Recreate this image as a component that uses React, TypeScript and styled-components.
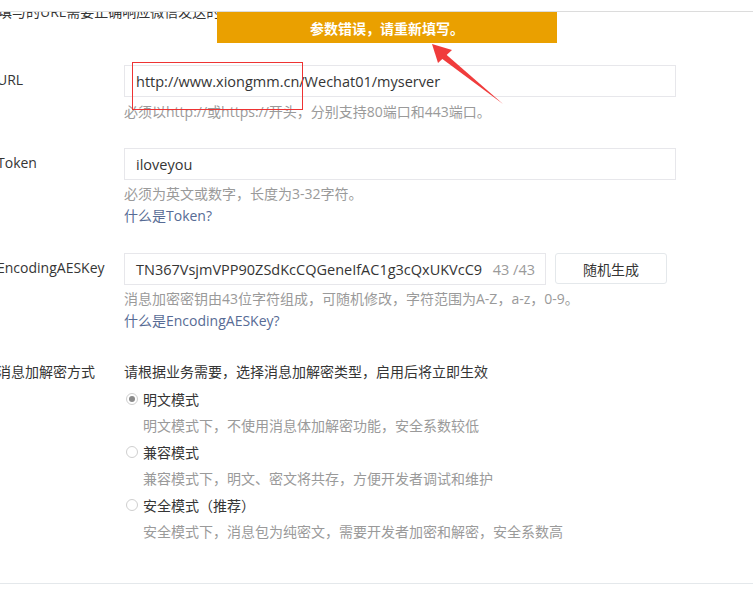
import React from "react";
import styled, { createGlobalStyle } from "styled-components";

const GlobalStyle = createGlobalStyle`
  html, body {
    margin: 0;
    padding: 0;
    background: #ffffff;
  }
  body {
    font-family: "Open Sans", "Noto Sans CJK SC", sans-serif;
    color: #353535;
    font-size: 14px;
  }
`;

const Screen = styled.div`
  position: relative;
  width: 753px;
  height: 596px;
  overflow: hidden;
  background: #fff;
`;

const BrowserEdge = styled.div`
  height: 11px;
  border-bottom: 1px solid #dcdcdc;
  background: #fff;
  position: relative;
  z-index: 2;
`;

// the page is scrolled: only the bottom of this line shows under the browser edge
const IntroClip = styled.div`
  height: 9px;
  width: 219px;
  overflow: hidden;
  margin-left: -2px;
`;

const IntroText = styled.div`
  font-size: 14px;
  line-height: 14px;
  margin-top: -7px;
  white-space: nowrap;
`;

const Form = styled.div`
  margin-left: -3px;
  margin-top: 44px;
  display: flex;
  flex-direction: column;
`;

const Row = styled.div<{ $gap?: number }>`
  display: grid;
  grid-template-columns: 127px 560px;
  margin-bottom: ${p => p.$gap ?? 0}px;
`;

const Label = styled.div<{ $top?: number }>`
  font-size: 14px;
  line-height: 22px;
  padding-top: ${p => p.$top ?? 0}px;
  white-space: nowrap;
`;

const Field = styled.div`
  display: flex;
  flex-direction: column;
`;

const InputLine = styled.div`
  display: flex;
  gap: 9px;
`;

const InputBox = styled.div<{ $width: number }>`
  box-sizing: border-box;
  width: ${p => p.$width}px;
  height: 32px;
  border: 1px solid #e7e7eb;
  padding: 0 10px 0 11px;
  display: flex;
  align-items: center;
  justify-content: space-between;
  font-size: 14.5px;
  color: #353535;
  white-space: nowrap;
`;

const Counter = styled.span`
  color: #9a9a9a;
  font-size: 14.5px;
`;

const Button = styled.button`
  box-sizing: border-box;
  width: 112px;
  height: 31px;
  border: 1px solid #e4e8eb;
  border-radius: 3px;
  background: #fff;
  font-family: "Noto Sans CJK SC", sans-serif;
  font-size: 14px;
  color: #353535;
`;

const Hint = styled.div<{ $top?: number }>`
  color: #9a9a9a;
  font-size: 14px;
  line-height: 22px;
  margin-top: ${p => p.$top ?? 0}px;
  white-space: nowrap;
`;

const HelpLink = styled.a`
  color: #576b95;
  font-size: 14px;
  line-height: 22px;
  text-decoration: none;
`;

const Intro = styled.div`
  font-size: 14px;
  line-height: 22px;
`;

const Options = styled.div`
  margin-top: 3px;
  display: flex;
  flex-direction: column;
`;

const OptionLine = styled.label`
  display: flex;
  align-items: center;
  height: 26px;
  font-size: 14px;
  padding-left: 2px;
`;

const Radio = styled.span<{ $checked?: boolean }>`
  box-sizing: border-box;
  width: 12px;
  height: 12px;
  border-radius: 50%;
  border: 1px solid #cfcfcf;
  margin-right: 5px;
  display: flex;
  align-items: center;
  justify-content: center;
  &::after {
    content: "";
    width: 6px;
    height: 6px;
    border-radius: 50%;
    background: ${p => (p.$checked ? "#8a8a8a" : "transparent")};
  }
`;

const OptionDesc = styled.div`
  height: 27px;
  line-height: 27px;
  padding-left: 19px;
  color: #9a9a9a;
  font-size: 14px;
`;

const BottomRule = styled.div`
  margin-top: 38px;
  margin-left: 3px;
  width: 760px;
  border-top: 1px solid #e4e8eb;
`;

const Toast = styled.div`
  position: absolute;
  left: 217px;
  top: 12px;
  width: 340px;
  height: 31px;
  background: #eaa000;
  color: #fff;
  font-family: "Noto Sans CJK SC", sans-serif;
  font-weight: bold;
  font-size: 14px;
  display: flex;
  align-items: center;
  justify-content: center;
  z-index: 3;
`;

const Highlight = styled.div`
  position: absolute;
  left: 132px;
  top: 62px;
  width: 171px;
  height: 48px;
  border: 1px solid #ee3333;
  box-sizing: border-box;
`;

const ArrowLayer = styled.svg`
  position: absolute;
  left: 0;
  top: 0;
  z-index: 4;
`;

const options = [
  { name: "明文模式", desc: "明文模式下，不使用消息体加解密功能，安全系数较低", checked: true },
  { name: "兼容模式", desc: "兼容模式下，明文、密文将共存，方便开发者调试和维护", checked: false },
  { name: "安全模式（推荐）", desc: "安全模式下，消息包为纯密文，需要开发者加密和解密，安全系数高", checked: false },
];

export default function App() {
  return (
    <Screen>
      <GlobalStyle />
      <BrowserEdge />
      <IntroClip>
        <IntroText>填与的URL需要正确响应微信发送的</IntroText>
      </IntroClip>
      <Form>
        <Row $gap={25}>
          <Label $top={4}>URL</Label>
          <Field>
            <InputBox $width={552}>http://www.xiongmm.cn/Wechat01/myserver</InputBox>
            <Hint $top={4}>必须以http://或https://开头，分别支持80端口和443端口。</Hint>
          </Field>
        </Row>
        <Row $gap={26}>
          <Label $top={4}>Token</Label>
          <Field>
            <InputBox $width={552}>iloveyou</InputBox>
            <Hint $top={3}>必须为英文或数字，长度为3-32字符。</Hint>
            <HelpLink href="#">什么是Token?</HelpLink>
          </Field>
        </Row>
        <Row $gap={29}>
          <Label $top={4}>EncodingAESKey</Label>
          <Field>
            <InputLine>
              <InputBox $width={422}>
                <span>TN367VsjmVPP90ZSdKcCQGeneIfAC1g3cQxUKVcC9</span>
                <Counter>43 /43</Counter>
              </InputBox>
              <Button>随机生成</Button>
            </InputLine>
            <Hint $top={3}>消息加密密钥由43位字符组成，可随机修改，字符范围为A-Z，a-z，0-9。</Hint>
            <HelpLink href="#">什么是EncodingAESKey?</HelpLink>
          </Field>
        </Row>
        <Row>
          <Label>消息加解密方式</Label>
          <Field>
            <Intro>请根据业务需要，选择消息加解密类型，启用后将立即生效</Intro>
            <Options>
              {options.map(o => (
                <React.Fragment key={o.name}>
                  <OptionLine>
                    <Radio $checked={o.checked} />
                    {o.name}
                  </OptionLine>
                  <OptionDesc>{o.desc}</OptionDesc>
                </React.Fragment>
              ))}
            </Options>
          </Field>
        </Row>
        <BottomRule />
      </Form>
      <Toast>参数错误，请重新填写。</Toast>
      <Highlight />
      <ArrowLayer width="753" height="596" viewBox="0 0 753 596">
        <polygon points="503,104 441,50 437,55" fill="#f03c3c" />
        <polygon points="432,44 452,50 438,63" fill="#f03c3c" />
      </ArrowLayer>
    </Screen>
  );
}
